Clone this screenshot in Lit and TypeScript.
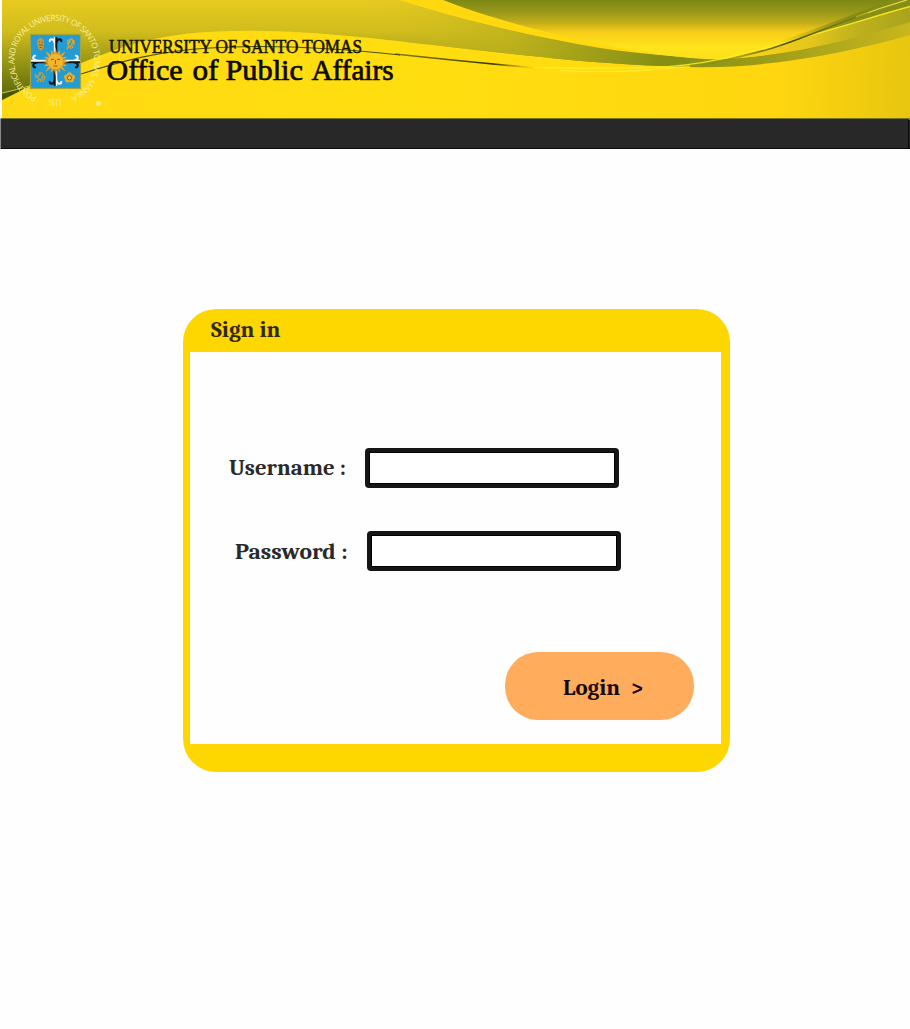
import { LitElement, html, css, svg } from "lit";
import { customElement } from "lit/decorators.js";

const rays = Array.from({ length: 16 }, (_, i) => {
  const r = i % 2 ? 12.4 : 14.4;
  const a = (i * Math.PI) / 8;
  const p = (ang: number, rad: number) =>
    `${(55.5 + Math.cos(ang) * rad).toFixed(2)},${(61.5 + Math.sin(ang) * rad).toFixed(2)}`;
  return svg`<polygon points="${p(a - 0.22, 7.5)} ${p(a, r)} ${p(a + 0.22, 7.5)}"></polygon>`;
});

// One arm of the anchored cross, pointing up, split lengthwise into two colours.
const arm = (angle: number, left: string, right: string) => svg`
  <g transform="rotate(${angle} 55.5 61.5) translate(55.5 61.5)">
    <path d="M-0.7 -9V-24.500M-0.7 -17.500Q-1.500 -22.500 -4.200 -22.300Q-6.400 -21.600 -5.600 -19.600" fill="none" stroke=${left} stroke-width="2"></path>
    <path d="M0.800 -9V-24.500M0.800 -17.500Q1.500 -22.500 4.200 -22.300Q6.400 -21.600 5.600 -19.600" fill="none" stroke=${right} stroke-width="2"></path>
  </g>`;

@customElement("ust-banner")
export class UstBanner extends LitElement {
  static styles = css`
    :host { display: block; height: 149px; }
    svg { display: block; }
    .ring { font: 8.2px "Open Sans", "Noto Sans", sans-serif; fill: #f8f0a2; }
    .mark { font-size: 5px; }
    .univ { font: 18px "Liberation Serif", serif; fill: #151404; stroke: #151404; stroke-width: 0.55px; }
    .office { font: 28.8px "Liberation Serif", serif; fill: #0c0b02; stroke: #0c0b02; stroke-width: 0.7px; }
  `;

  render() {
    return html`
      <svg width="910" height="149" viewBox="0 0 910 149">
        <defs>
          <linearGradient id="base" x1="0" x2="910" y1="0" y2="40" gradientUnits="userSpaceOnUse">
            <stop offset="0" stop-color="#ffd914"></stop>
            <stop offset="0.45" stop-color="#ffde0f"></stop>
            <stop offset="0.86" stop-color="#ffd60f"></stop>
            <stop offset="1" stop-color="#e8c60f"></stop>
          </linearGradient>
          <linearGradient id="left" x1="0" x2="0" y1="0" y2="90" gradientUnits="userSpaceOnUse">
            <stop offset="0" stop-color="#e8cb20"></stop>
            <stop offset="0.35" stop-color="#d0bc1d"></stop>
            <stop offset="0.7" stop-color="#959516"></stop>
            <stop offset="1" stop-color="#66700c"></stop>
          </linearGradient>
          <linearGradient id="mid" x1="360" x2="660" y1="0" y2="0" gradientUnits="userSpaceOnUse">
            <stop offset="0" stop-color="#dcc321" stop-opacity="0"></stop>
            <stop offset="0.5" stop-color="#beb21c" stop-opacity="0.8"></stop>
            <stop offset="1" stop-color="#858f14"></stop>
          </linearGradient>
          <linearGradient id="dome" x1="0" x2="0" y1="0" y2="60" gradientUnits="userSpaceOnUse">
            <stop offset="0" stop-color="#7d8814"></stop>
            <stop offset="0.2" stop-color="#97981a"></stop>
            <stop offset="0.38" stop-color="#c4ae18"></stop>
            <stop offset="0.54" stop-color="#f8ce18"></stop>
            <stop offset="0.8" stop-color="#ffe41c"></stop>
            <stop offset="1" stop-color="#fcdf1a"></stop>
          </linearGradient>
          <linearGradient id="tail" x1="650" x2="910" y1="0" y2="0" gradientUnits="userSpaceOnUse">
            <stop offset="0" stop-color="#858f14"></stop>
            <stop offset="0.4" stop-color="#999b16"></stop>
            <stop offset="0.75" stop-color="#b4ab1c"></stop>
            <stop offset="1" stop-color="#c8b61c"></stop>
          </linearGradient>
          <linearGradient id="sheen" x1="740" x2="910" y1="0" y2="0" gradientUnits="userSpaceOnUse">
            <stop offset="0" stop-color="#fbd51c"></stop>
            <stop offset="0.4" stop-color="#e6c61c"></stop>
            <stop offset="0.7" stop-color="#beb01c"></stop>
            <stop offset="1" stop-color="#a8a41c"></stop>
          </linearGradient>
          <linearGradient id="corner" x1="780" x2="850" y1="0" y2="0" gradientUnits="userSpaceOnUse">
            <stop offset="0" stop-color="#7f8815" stop-opacity="0"></stop>
            <stop offset="1" stop-color="#828b16" stop-opacity="0.9"></stop>
          </linearGradient>
          <linearGradient id="dark" x1="395" x2="535" y1="0" y2="0" gradientUnits="userSpaceOnUse">
            <stop offset="0" stop-color="#4c5208" stop-opacity="0.7"></stop>
            <stop offset="0.7" stop-color="#343a02"></stop>
            <stop offset="1" stop-color="#8b8a10" stop-opacity="0"></stop>
          </linearGradient>
          <linearGradient id="ink" x1="720" x2="866" y1="0" y2="0" gradientUnits="userSpaceOnUse">
            <stop offset="0" stop-color="#8a8b10" stop-opacity="0.5"></stop>
            <stop offset="0.5" stop-color="#454a04"></stop>
            <stop offset="1" stop-color="#6d7810" stop-opacity="0.4"></stop>
          </linearGradient>
          <path id="ringPath" d="M37.2 96.8A40 40 0 1 1 72.400 96.4"></path>
        </defs>

        <rect x="2" width="908" height="119" fill="url(#base)"></rect>
        <path d="M2 0H400C450 16 530 37 600 47Q665 57 720 60V67Q660 68 570 60C490 52 400 41 360 37C260 27 190 29 140 42C100 53 40 80 2 100Z" fill="url(#left)"></path>
        <path d="M360 0H400C450 16 530 37 600 47Q665 57 720 60V67Q660 68 570 60C490 52 400 41 360 37Z" fill="url(#mid)"></path>
        <path d="M400 0H443C500 22 560 37 600 44Q650 53 700 58Q640 54 600 48C530 37 450 16 400 0Z" fill="#ffd80f"></path>
        <path d="M443 0H910C850 18 790 50 720 60Q660 57 600 44C550 34 495 20 443 0Z" fill="url(#dome)"></path>
        <path d="M690 59Q710 60 725 59C790 55 850 39 910 20V35C840 55 760 69 690 67Z" fill="url(#tail)"></path>
        <path d="M738 58C790 46 850 20 910 0V22C860 37 800 54 738 58Z" fill="url(#sheen)"></path>
        <path d="M780 41C820 28 850 15 890 0H910V6.500C875 16 830 29 780 44Z" fill="url(#corner)"></path>
        <path d="M535 67.500Q600 69 650 67.500C710 66 755 51 805 37S875 16 910 6.500" fill="none" stroke="#fff021" stroke-opacity="0.850" stroke-width="1.400"></path>
        <path d="M560 70.500Q625 74 690 66" fill="none" stroke="#ffed35" stroke-opacity="0.700" stroke-width="1.500"></path>
        <path d="M856 17Q880 8 907 0" fill="none" stroke="#e7d93c" stroke-width="1.300"></path>
        <path d="M700 66Q735 58 766 50C800 40 830 26 868 13" fill="none" stroke="url(#ink)" stroke-width="1.800"></path>
        <path d="M81 74C125 60 160 51 210 48C270 44 345 49 400 55" fill="none" stroke="#4b5708" stroke-width="1.100"></path>
        <path d="M395 54Q460 61 535 68" fill="none" stroke="url(#dark)" stroke-width="1.700"></path>
        <path d="M2 94L28 87Q14 94 2 100Z" fill="#45560a"></path>
        <path d="M2 93Q16 90 31 85.500" fill="none" stroke="#dccc38" stroke-width="0.900"></path>

        <rect x="30.500" y="34.500" width="50" height="54" fill="#239bd5" stroke="#a4a341" stroke-width="1.200"></rect>
        ${arm(0, "#f4f6f8", "#11151c")}
        ${arm(90, "#f4f6f8", "#11151c")}
        ${arm(180, "#f4f6f8", "#11151c")}
        ${arm(270, "#11151c", "#f4f6f8")}
        <g fill="#eba623">${rays}</g>
        <circle cx="55.500" cy="61.500" r="8.200" fill="#f3b52c" stroke="#ce811b" stroke-width="0.600"></circle>
        <path d="M51 59.500L54 59.300M57 59.300L60 59.500M55.500 60V63.500L54.700 64M53.500 66H57.500" fill="none" stroke="#865313" stroke-width="0.900"></path>
        <path d="M37 43Q36.500 39 40.500 38Q44.500 39 44 43L43.500 48L41 51L38 48Z" fill="#c99a30"></path>
        <path d="M38.500 42H40M41.500 42H43M38.500 45H43M39.500 47.500H42" stroke="#755827" stroke-width="0.800"></path>
        <path d="M67 49L69 46L67.500 43L70 42L69.500 39.500L72 39L73 42L71.500 44.500L73 48M70 43L67 40M74 45V40M70 46L71 49" fill="none" stroke="#d6a632" stroke-width="1.400"></path>
        <path d="M37 82L39 79L37 76L40 75L39.500 73L42 73L43.500 76L41.500 78L43.500 82M36 78L35.500 74M40 79L41 82M44 80L45 76" fill="none" stroke="#bf9f39" stroke-width="1.400"></path>
        <g fill="#e4ac2c">
          <circle cx="69.500" cy="74.800" r="2.500"></circle><circle cx="66.500" cy="77" r="2.500"></circle>
          <circle cx="67.600" cy="80" r="2.500"></circle><circle cx="71.400" cy="80" r="2.500"></circle>
          <circle cx="72.500" cy="77" r="2.500"></circle>
        </g>
        <circle cx="69.500" cy="77.800" r="2.100" fill="#efc443" stroke="#805920" stroke-width="0.900"></circle>

        <text class="ring"><textPath href="#ringPath" textLength="216" lengthAdjust="spacing">PONTIFICAL AND ROYAL UNIVERSITY OF SANTO TOMAS, MANILA</textPath></text>
        <text class="ring" x="48" y="106" textLength="14" lengthAdjust="spacingAndGlyphs">1611</text>
        <circle cx="98.600" cy="103.400" r="2.700" fill="#f7ef9d" opacity="0.600"></circle>
        <text class="ring mark" x="96.500" y="105.500">®</text>

        <text class="univ" x="109" y="52.500" textLength="253" lengthAdjust="spacingAndGlyphs">UNIVERSITY OF SANTO TOMAS</text>
        <text class="office" y="79.500">
          <tspan x="106.500" textLength="76" lengthAdjust="spacingAndGlyphs">Office</tspan>
          <tspan x="192.500" textLength="26" lengthAdjust="spacingAndGlyphs">of</tspan>
          <tspan x="225.500" textLength="77.500" lengthAdjust="spacingAndGlyphs">Public</tspan>
          <tspan x="311.500" textLength="82" lengthAdjust="spacingAndGlyphs">Affairs</tspan>
        </text>

        <rect x="0.500" y="118.500" width="909" height="30.500" fill="#282828"></rect>
        <path d="M1 118.500H910" fill="none" stroke="#777329" stroke-width="1"></path>
        <path d="M0.500 119V149" fill="none" stroke="#8a8a8a" stroke-width="1"></path>
        <path d="M1 148.500H910" stroke="#0c0c0c" stroke-width="1"></path>
        <path d="M909 120V149" stroke="#000" stroke-width="1.500"></path>
      </svg>
    `;
  }
}

@customElement("app-root")
export class AppRoot extends LitElement {
  static styles = css`
    :host {
      display: block;
      min-height: 1029px;
      background: #fefefe;
      font: bold 23px Cambria, Caladea, "Liberation Serif", serif;
      color: #2a2a2a;
    }
    .card {
      box-sizing: border-box;
      width: 547.500px;
      height: 463.500px;
      margin: 159.500px 0 0 182.500px;
      padding: 0 9.500px 28px 7px;
      border-radius: 33px;
      background: #ffd700;
      display: flex;
      flex-direction: column;
    }
    .title {
      height: 43px;
      box-sizing: border-box;
      padding: 8px 0 0 21px;
      color: #302a18;
    }
    .form {
      flex: 1;
      background: #fefefe;
      display: flex;
      flex-direction: column;
      padding-top: 96px;
    }
    .row { display: flex; align-items: center; height: 40px; margin-bottom: 43px; }
    .user { padding-left: 39px; }
    .pass { padding-left: 45px; }
    .label { flex: none; white-space: nowrap; }
    .user .label { width: 136.500px; }
    .pass .label { width: 132.500px; padding-top: 2px; }
    .field {
      box-sizing: border-box;
      width: 254px;
      height: 40px;
      border: 5px solid #151515;
      border-radius: 4px;
      padding: 0;
      outline: 1px solid #000;
      outline-offset: -5px;
      background: #fff;
    }
    .login {
      align-self: flex-end;
      width: 189px;
      height: 68px;
      margin: 38.500px 27px 0 0;
      padding: 3px 0 0 58.500px;
      box-sizing: border-box;
      border: 0;
      border-radius: 33px;
      background: #ffad5c;
      color: #180808;
      font: inherit;
      display: flex;
      align-items: center;
      gap: 11px;
    }
    svg { display: block; flex: none; overflow: visible; }
    text { fill: currentColor; }
  `;

  private word(text: string, width: number) {
    return html`<svg width=${width} height="26">
      <text x="0" y="20" textLength=${width} lengthAdjust="spacingAndGlyphs">${text}</text>
    </svg>`;
  }

  render() {
    return html`
      <ust-banner></ust-banner>
      <main class="card">
        <div class="title">${this.word("Sign in", 69.5)}</div>
        <div class="form">
          <label class="row user">
            <span class="label">${this.word("Username :", 117)}</span>
            <input class="field" type="text" />
          </label>
          <label class="row pass">
            <span class="label">${this.word("Password :", 112.5)}</span>
            <input class="field" type="password" />
          </label>
          <button class="login">${this.word("Login", 57)}${this.word(">", 12)}</button>
        </div>
      </main>
    `;
  }
}
